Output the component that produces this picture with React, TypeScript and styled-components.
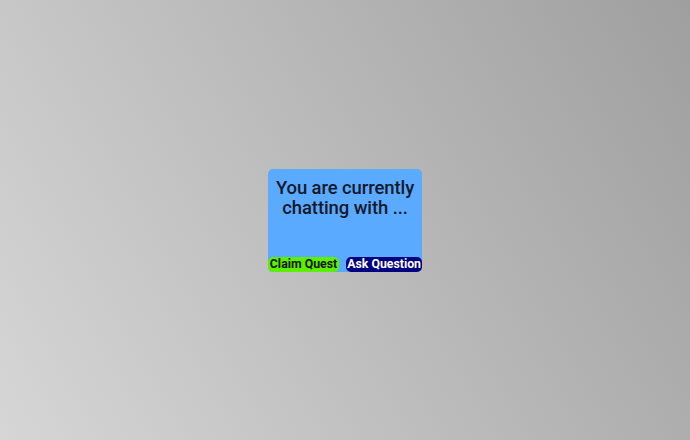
import React from 'react';
import styled, { createGlobalStyle } from 'styled-components';

const GlobalStyle = createGlobalStyle`
  html, body, #root {
    margin: 0;
    padding: 0;
    width: 100%;
    height: 100%;
  }
  body {
    font-family: Roboto, "Liberation Sans", sans-serif;
  }
`;

const Backdrop = styled.div`
  width: 100vw;
  height: 100vh;
  background: linear-gradient(60deg, #d6d6d6 0%, #9f9f9f 100%);
  display: flex;
  justify-content: center;
  align-items: center;
`;

const Card = styled.div`
  width: 154px;
  height: 103px;
  box-sizing: border-box;
  background: #5aabff;
  border-radius: 5px;
  display: flex;
  flex-direction: column;
  justify-content: space-between;
`;

const Message = styled.p`
  margin: 0;
  padding-top: 9px;
  font-size: 18.5px;
  font-weight: 500;
  line-height: 20px;
  letter-spacing: -0.1px;
  text-align: center;
  color: #14182a;
`;

const ButtonRow = styled.div`
  display: flex;
  justify-content: space-between;
  align-items: flex-end;
`;

const ActionButton = styled.button<{ $bg: string; $fg: string }>`
  margin: 0;
  padding: 0 1px;
  min-width: 71px;
  height: 15px;
  border: none;
  border-radius: 5px;
  background: ${(p) => p.$bg};
  color: ${(p) => p.$fg};
  font-family: Roboto, "Liberation Sans", sans-serif;
  font-size: 12.3px;
  font-weight: 700;
  line-height: 15px;
  text-align: center;
  white-space: nowrap;
`;

function App() {
  return (
    <>
      <GlobalStyle />
      <Backdrop>
        <Card>
          <Message>
            You are currently
            <br />
            chatting with ...
          </Message>
          <ButtonRow>
            <ActionButton $bg="#5cf000" $fg="#10140a">Claim Quest</ActionButton>
            <ActionButton $bg="#000080" $fg="#ffffff">Ask Question</ActionButton>
          </ButtonRow>
        </Card>
      </Backdrop>
    </>
  );
}

export default App;
